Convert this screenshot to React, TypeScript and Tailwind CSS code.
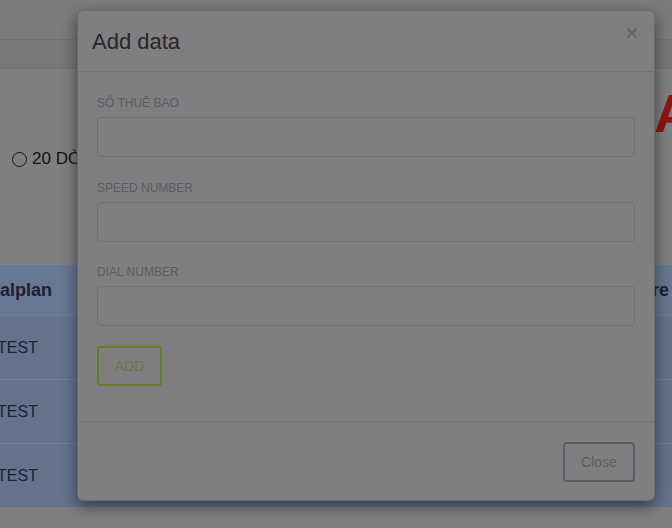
export default function App() {
  const fields = ["SỐ THUÊ BAO", "SPEED NUMBER", "DIAL NUMBER"];
  const rows = ["TEST", "TEST", "TEST"];

  return (
    <div className="relative h-[528px] w-full overflow-hidden bg-[#7f7f80] font-['Liberation_Sans',Arial,sans-serif]">
      {/* page behind the modal (already dimmed by the backdrop) */}
      <div className="h-[40px] border-b border-[#727273] bg-[#7c7c7d]" />
      <div className="h-[29px] border-b border-[#727273] bg-[#78787a]" />

      <div className="flex h-[196px] flex-col">
        <div className="mt-[17px] whitespace-nowrap pl-[654px] text-[54px] font-bold leading-none text-[#8e1414]">
          ADD DATA
        </div>
        <div className="mt-[7px] flex items-center gap-[5px] pl-[12px]">
          <span className="h-[15px] w-[15px] rounded-full border border-[#161616]" />
          <span className="whitespace-nowrap text-[17px] leading-[24px] text-[#121212]">20 DÒNG</span>
        </div>
      </div>

      {/* table */}
      <div className="bg-[#5e6882]">
        <div className="flex h-[51px] items-center justify-between border-b border-[#727e96] bg-[#687794] text-[18px] font-bold text-[#1b2130]">
          <span className="ml-[-18px]">Dialplan</span>
          <span className="mr-[3px]">Share</span>
        </div>
        {rows.map((r, i) => (
          <div
            key={i}
            className="flex h-[64px] items-center border-b border-[#727e96] bg-[#65738c] text-[16px] text-[#1d2230]"
          >
            <span className="ml-[-3px] pt-[1px]">{r}</span>
          </div>
        ))}
      </div>

      {/* modal */}
      <div className="absolute left-[77px] top-[10px] w-[578px] rounded-[6px] border border-[#6a696c] bg-[#807e81] shadow-[0_5px_15px_rgba(0,0,0,0.5)]">
        <div className="flex h-[61px] items-start justify-between border-b border-[#737275] px-[14px]">
          <h4 className="self-center text-[22px] leading-[31px] text-[#27262b]">Add data</h4>
          <span className="mr-[2px] mt-[11px] text-[21px] font-bold leading-none text-[#68676a]">×</span>
        </div>

        <div className="px-[19px] pb-[35px] pt-[23px]">
          {fields.map((f, i) => (
            <div key={f} className={i === 0 ? "mb-[23px]" : i === 1 ? "mb-[22px]" : "mb-[20px]"}>
              <label className="mb-[5px] block text-[12px] leading-[17px] text-[#5c5b5f]">{f}</label>
              <input className="block h-[40px] w-full rounded-[4px] border border-[#706f72] bg-transparent px-3 outline-none" />
            </div>
          ))}
          <button className="h-[40px] w-[65px] rounded-[3px] border-2 border-[#62802a] text-[14px] text-[#687843]">
            ADD
          </button>
        </div>

        <div className="flex justify-end border-t border-[#737275] pb-[18px] pr-[19px] pt-[20px]">
          <button className="h-[40px] w-[72px] rounded-[4px] border-2 border-[#5b5a5e] text-[14px] text-[#5d5c60]">
            Close
          </button>
        </div>
      </div>
    </div>
  );
}
